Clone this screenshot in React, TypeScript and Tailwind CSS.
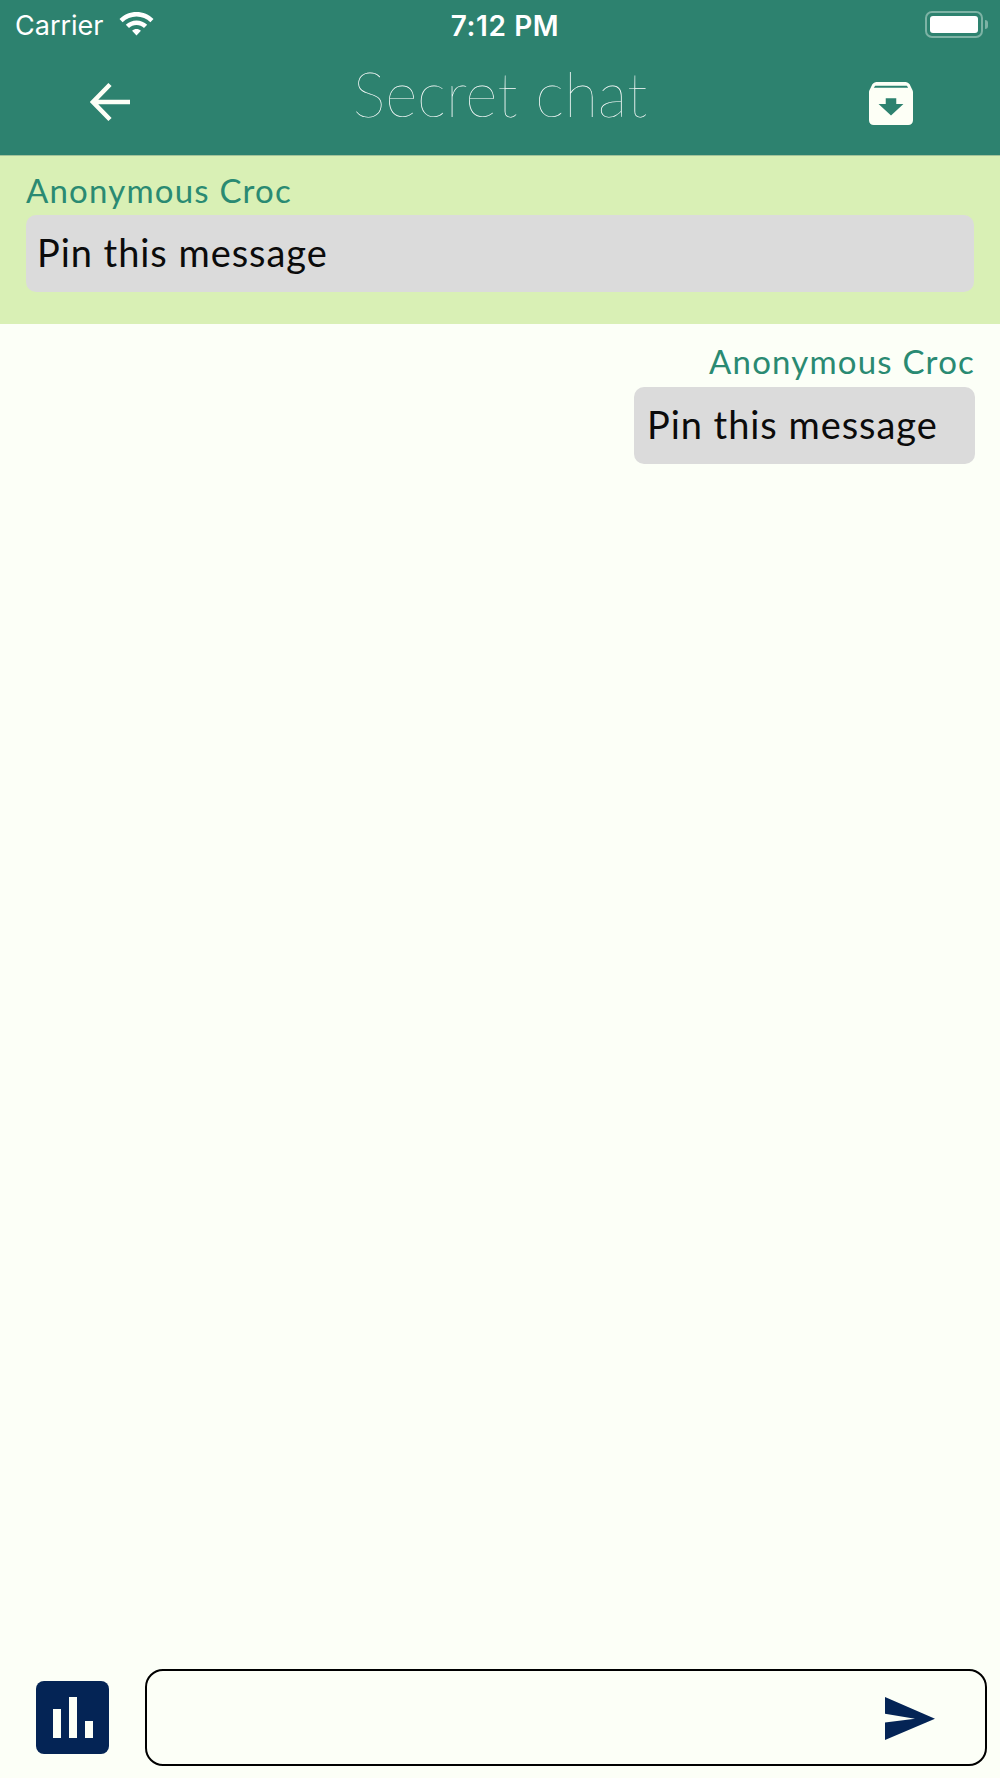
export default function App() {
  const sans = "font-['Lato','Open_Sans',sans-serif]";
  return (
    <div className={`flex h-[1778px] w-[1000px] flex-col overflow-hidden bg-[#fcfff7] ${sans}`}>
      <header className="flex h-[156px] flex-col border-b border-[#a3c39a] bg-[#2d826f] text-white">
        <div className="relative flex h-[50px] items-center pl-[15px] pr-[12px] pt-[1px]">
          <span className="font-['Inter',sans-serif] text-[27px] leading-none">Carrier</span>
          <svg className="ml-[15px] mb-[3px]" width="35" height="25" viewBox="0 0 35 25" fill="white">
            <path d="M17.5 0C11 0 5 2.6 0.5 7L3.6 10.2C7.3 6.7 12.2 4.5 17.5 4.5S27.7 6.7 31.4 10.2L34.5 7C30 2.6 24 0 17.5 0Z" />
            <path d="M17.5 8.5C13.4 8.5 9.7 10.1 6.800 12.8L10 16C12 14.2 14.6 13 17.5 13S23 14.2 25 16L28.2 12.8C25.3 10.1 21.6 8.5 17.5 8.5Z" />
            <path d="M17.5 17C15.8 17 14.3 17.6 13.1 18.8L17.5 23.5L21.9 18.8C20.7 17.6 19.2 17 17.5 17Z" />
          </svg>
          <span className="absolute left-[10px] right-0 text-center font-['Inter',sans-serif] text-[28px] font-semibold leading-none tracking-[0.6px]">7:12 PM</span>
          <div className="ml-auto mb-[2px] flex items-center">
            <div className="flex h-[27px] w-[58px] items-center rounded-[7px] border-2 border-[#7db3a5] p-[3px]">
              <div className="h-full w-full rounded-[3px] bg-white" />
            </div>
            <div className="ml-[2px] h-[9px] w-[3px] rounded-r-full bg-[#7db3a5]" />
          </div>
        </div>
        <div className="relative flex flex-1 items-center justify-between pl-[90px] pr-[87px]">
          <svg width="40" height="40" viewBox="0 0 40 40" fill="none" stroke="#fdfff6" strokeWidth="4.5" className="mb-[2px]">
            <path d="M41 20H3M20 2.5L3 20L20 37.5" />
          </svg>
          <span className="absolute left-0 right-0 top-[7px] text-center text-[62px] font-thin leading-[72px] text-white">Secret chat</span>
          <svg width="44" height="44" viewBox="0 0 46 46">
            <path d="M8 1H38C40 1 41.5 2 42.5 3.5L45 8.5C45.6 9.6 46 10.5 46 12V41C46 44 44 46 41 46H5C2 46 0 44 0 41V12C0 10.5 0.4 9.6 1 8.5L3.5 3.5C4.5 2 6 1 8 1Z" fill="#fdfff6" />
            <path d="M6.5 5H39.500L41 7H5Z" fill="#2d826f" />
            <path d="M17.500 18H28.500V24H36L23 36L10 24H17.500Z" fill="#2d826f" />
          </svg>
        </div>
      </header>

      <section className="flex h-[168px] flex-col bg-[#d9f0b5] px-[26px] pt-[10px]">
        <div className="text-[33px] leading-[49px] tracking-[1.2px] text-[#2a8a72]">Anonymous Croc</div>
        <div className="flex h-[77px] items-center rounded-[10px] bg-[#dbdbdb] px-[11px] pb-[3px] text-[38px] tracking-[0.95px] text-[#0b0b0b]">
          Pin this message
        </div>
      </section>

      <main className="flex flex-1 flex-col items-end px-[25px] pt-[12px]">
        <div className="text-[33px] leading-[51px] tracking-[1.2px] text-[#2a8a72]">Anonymous Croc</div>
        <div className="flex h-[77px] w-[341px] items-center rounded-[10px] bg-[#dbdbdb] px-[13px] pb-[3px] text-[38px] tracking-[0.95px] text-[#0b0b0b]">
          Pin this message
        </div>
      </main>

      <footer className="flex h-[109px] items-start pl-[36px] pr-[13px]">
        <div className="mt-[12px] flex h-[73px] w-[73px] items-end justify-center gap-[8px] rounded-[8px] bg-[#042455] pb-[16px]">
          <div className="h-[29px] w-[8px] bg-[#fdfff6]" />
          <div className="h-[41px] w-[8px] bg-[#fdfff6]" />
          <div className="h-[17px] w-[8px] bg-[#fdfff6]" />
        </div>
        <div className="ml-[36px] flex h-[97px] flex-1 items-center justify-end rounded-[18px] border-2 border-black pr-[50px]">
          <svg width="50" height="43" viewBox="0 0 50 43" className="mt-[1px]">
            <path d="M0 0L50 21.700L0 43V25.500L30 21.700L0 16.700Z" fill="#042455" />
          </svg>
        </div>
      </footer>
    </div>
  );
}
